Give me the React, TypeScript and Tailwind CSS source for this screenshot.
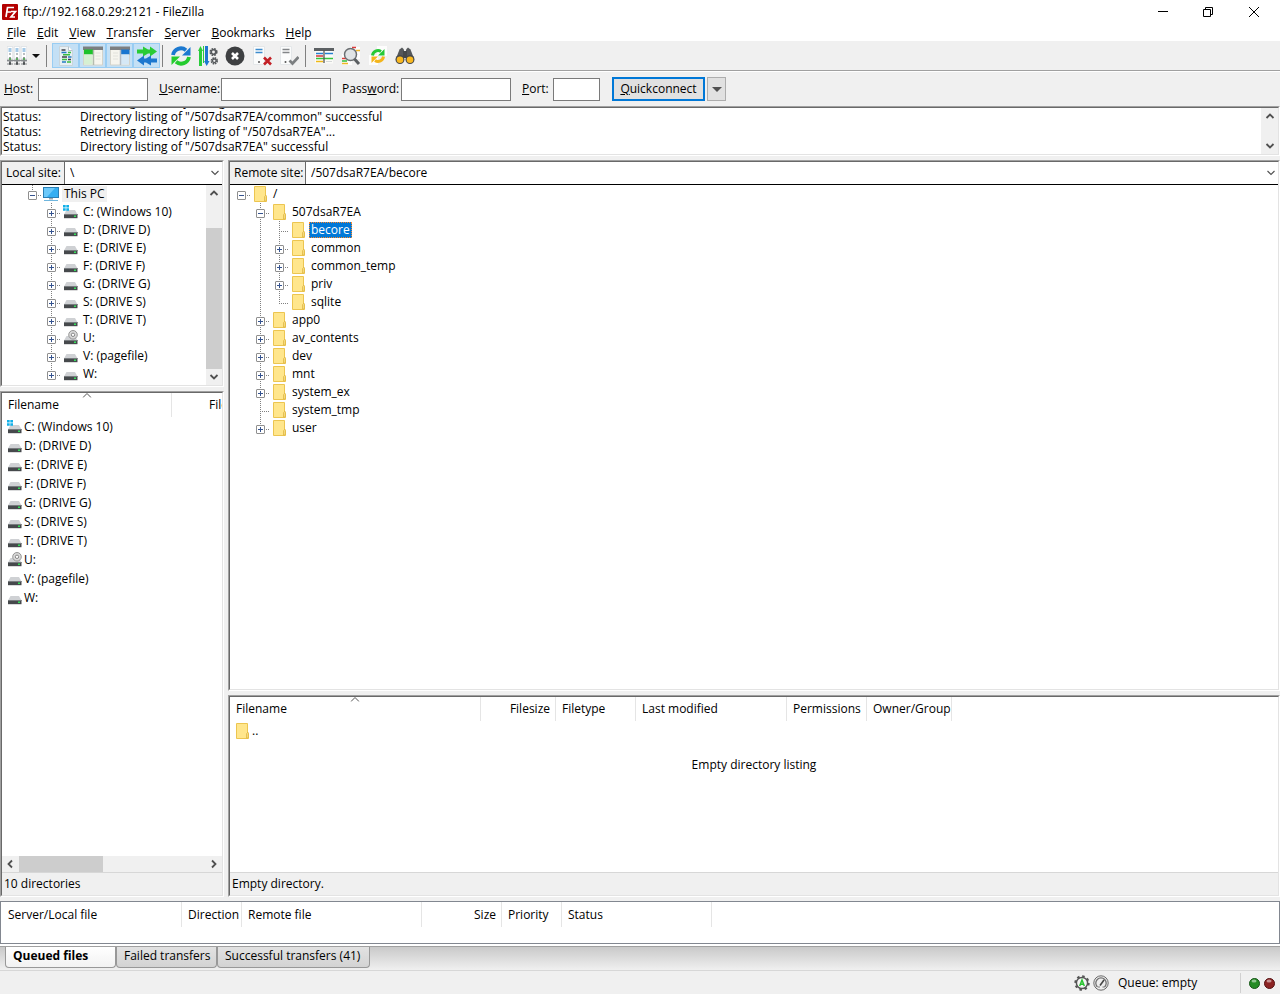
import type { ReactNode } from 'react'
import clsx from 'clsx'

type DriveKind = 'windows' | 'disk' | 'optical'

type Drive = {
  label: string,
  kind: DriveKind,
}

type GuideCell = 'blank' | 'line' | 'plus' | 'plusLast' | 'minus' | 'minusLast' | 'minusRoot' | 'tee' | 'elbow'

type RemoteNode = {
  name: string,
  cells: GuideCell[],
  selected?: boolean,
}

const drives: Drive[] = [
  { label: 'C: (Windows 10)', kind: 'windows' },
  { label: 'D: (DRIVE D)', kind: 'disk' },
  { label: 'E: (DRIVE E)', kind: 'disk' },
  { label: 'F: (DRIVE F)', kind: 'disk' },
  { label: 'G: (DRIVE G)', kind: 'disk' },
  { label: 'S: (DRIVE S)', kind: 'disk' },
  { label: 'T: (DRIVE T)', kind: 'disk' },
  { label: 'U:', kind: 'optical' },
  { label: 'V: (pagefile)', kind: 'disk' },
  { label: 'W:', kind: 'disk' },
]

const remoteNodes: RemoteNode[] = [
  { name: '/', cells: ['minusRoot'] },
  { name: '507dsaR7EA', cells: ['blank', 'minus'] },
  { name: 'becore', cells: ['blank', 'line', 'tee'], selected: true },
  { name: 'common', cells: ['blank', 'line', 'plus'] },
  { name: 'common_temp', cells: ['blank', 'line', 'plus'] },
  { name: 'priv', cells: ['blank', 'line', 'plus'] },
  { name: 'sqlite', cells: ['blank', 'line', 'elbow'] },
  { name: 'app0', cells: ['blank', 'plus'] },
  { name: 'av_contents', cells: ['blank', 'plus'] },
  { name: 'dev', cells: ['blank', 'plus'] },
  { name: 'mnt', cells: ['blank', 'plus'] },
  { name: 'system_ex', cells: ['blank', 'plus'] },
  { name: 'system_tmp', cells: ['blank', 'tee'] },
  { name: 'user', cells: ['blank', 'plusLast'] },
]

const logLines = [
  'Retrieving directory listing of "/507dsaR7EA/common"...',
  'Directory listing of "/507dsaR7EA/common" successful',
  'Retrieving directory listing of "/507dsaR7EA"...',
  'Directory listing of "/507dsaR7EA" successful',
]

const menus = [
  { key: 'F', rest: 'ile' },
  { key: 'E', rest: 'dit' },
  { key: 'V', rest: 'iew' },
  { key: 'T', rest: 'ransfer' },
  { key: 'S', rest: 'erver' },
  { key: 'B', rest: 'ookmarks' },
  { key: 'H', rest: 'elp' },
]

/* ---------- shared pieces ---------- */

const Sunken = ({ className, children }: { className?: string, children: ReactNode }) => (
  <div className={clsx('flex border border-t-[#a0a0a0] border-l-[#a0a0a0] border-r-white border-b-white', className)}>
    <div className="flex min-w-0 flex-1 flex-col overflow-hidden border border-t-[#696969] border-l-[#696969] border-r-[#e3e3e3] border-b-[#e3e3e3] bg-white">
      {children}
    </div>
  </div>
)

const chevrons = {
  up: 'M1.500 7 L5 3.500 L8.500 7',
  down: 'M1.500 3 L5 6.500 L8.500 3',
  left: 'M7 1.500 L3.500 5 L7 8.500',
  right: 'M3 1.500 L6.500 5 L3 8.500',
}

const Chevron = ({ dir, bold }: { dir: keyof typeof chevrons, bold?: boolean }) => (
  <svg width="10" height="10" viewBox="0 0 10 10" fill="none" stroke="#505050" strokeWidth={bold ? 1.8 : 1.1} aria-hidden="true">
    <path d={chevrons[dir]} />
  </svg>
)

const ScrollButton = ({ dir }: { dir: keyof typeof chevrons }) => (
  <button type="button" aria-label={`Scroll ${dir}`} className="flex h-4 w-4 shrink-0 items-center justify-center">
    <Chevron dir={dir} bold />
  </button>
)

/* ---------- small icons ---------- */

const FolderIcon = () => (
  <svg width="16" height="16" viewBox="0 0 16 16" className="shrink-0" aria-hidden="true">
    <path d="M1.500 .5h11v9l1 .8v5.200h-12z" fill="#ffe68c" stroke="#ecc550" />
    <path d="M11.500 15V10.500l1.500-1.500v6z" fill="#ffeeaa" stroke="#dfb63f" strokeWidth=".8" />
  </svg>
)

const PcIcon = () => (
  <svg width="18" height="16" viewBox="0 0 18 16" className="shrink-0" aria-hidden="true">
    <rect x="1.500" y="1.500" width="15" height="10" fill="#35aef2" stroke="#2a7fb5" />
    <path d="M2 2h11L5 11H2z" fill="#6cc9fa" />
    <path d="M7 12h4v1.500H7z" fill="#9aa5ad" />
    <path d="M2 14.500h14" stroke="#6fb6de" />
  </svg>
)

const DriveIcon = ({ kind }: { kind: DriveKind }) => (
  <svg width="16" height="16" viewBox="0 0 16 16" className="shrink-0" aria-hidden="true">
    <path d="M3.500 6h8.500l2.500 4.500H1z" fill="#cfd1d4" />
    <path d="M1 10h13.500v4.200H1z" fill="#46494c" />
    <path d="M1 10h13.500v1H1z" fill="#777b7e" />
    <rect x="11" y="11.500" width="2" height="1.500" fill="#35e05a" />
    {kind === 'windows' && (
      <path d="M0 1h2.700v2.500H0zM3.300 1H6v2.500H3.300zM0 4.200h2.700v2.500H0zM3.300 4.200H6v2.500H3.300z" fill="#12b0e8" />
    )}
    {kind === 'optical' && (
      <>
        <circle cx="10" cy="4.800" r="4.300" fill="#d8d8d8" stroke="#8c8c8c" strokeWidth=".9" />
        <circle cx="10" cy="4.800" r="1.700" fill="#fff" stroke="#888" />
      </>
    )}
  </svg>
)

const AppIcon = () => (
  <svg width="16" height="16" viewBox="0 0 16 16" aria-hidden="true">
    <rect width="16" height="16" rx="1" fill="#b30000" />
    <path d="M4 13L5.500 3.500H12M4.800 8H9M9 7.500h4.500L9 13h4" fill="none" stroke="#fff" strokeWidth="1.700" />
  </svg>
)

/* ---------- toolbar icons ---------- */

const Icon = ({ children }: { children: ReactNode }) => (
  <svg width="20" height="20" viewBox="0 0 20 20" fill="none" className="shrink-0" aria-hidden="true">{children}</svg>
)

const SiteManagerIcon = () => (
  <Icon>
    {[0, 7, 14].map((x) => (
      <g key={x} transform={`translate(${x} 0)`}>
        <path d="M.3 .5h5.400v12H.3z" fill="#fff" stroke="#d3d9dd" strokeWidth=".6" />
        <path d="M1.500 3h3M1.500 5h3" stroke="#4b93cf" strokeWidth="1.200" />
        <circle cx="3" cy="8" r=".9" fill="#9aa0a4" />
        <path d="M3 11v6M0 14.500h6" stroke="#6a6e70" strokeWidth="1.400" />
        <path d="M0 18h6" stroke="#85898c" />
        <path d="M2 17.500h2" stroke="#4c5052" strokeWidth="2.500" />
        <circle cx="3" cy="13" r="1" fill="#4db74d" />
      </g>
    ))}
    <path d="M0 14.500h20" stroke="#85898c" strokeWidth="1.200" />
  </Icon>
)

const LogIcon = () => (
  <Icon>
    <path d="M3.500 .5h9l4 4V19.500h-13z" fill="#e8eff3" stroke="#c9d5dc" />
    <path d="M12.500 .5v4h4" fill="#fff" stroke="#b6c3cb" />
    <path d="M5.500 4h4M6 11h5M12 13.500h3" stroke="#3d4248" strokeWidth="1.500" />
    <path d="M5.500 6.500h5M12 11h3.500M6 16h4" stroke="#247cc4" strokeWidth="1.500" />
    <path d="M12 6.500h3M6 13.500h5M11 16h4M7 8.800h7" stroke="#39bd40" strokeWidth="1.500" />
  </Icon>
)

const LocalTreeIcon = () => (
  <Icon>
    <path d="M.5 3h19v16H.5z" fill="#f6f5ee" stroke="#d4d3ca" />
    <path d="M0 .5h20v3.500H0z" fill="#7c7f81" />
    <path d="M1 3.500h9v5H1z" fill="#1dc22a" />
    <path d="M1 8.500h8.500V18.500H1z" fill="#d6f0d2" />
    <path d="M10.500 4v15" stroke="#b4bcb0" strokeWidth="1.500" />
    <path d="M12.500 7h5M12.500 10h5M12.500 13h5" stroke="#e2e2dc" />
  </Icon>
)

const RemoteTreeIcon = () => (
  <Icon>
    <path d="M.5 3h19v16H.5z" fill="#f6f5ee" stroke="#d4d3ca" />
    <path d="M0 .5h20v3.500H0z" fill="#7c7f81" />
    <path d="M11 3.500h8.500v5H11z" fill="#1976d0" />
    <path d="M11 8.500h8V18.500h-8z" fill="#d5e8f6" />
    <path d="M10.500 4v15" stroke="#b4bcc4" strokeWidth="1.500" />
    <path d="M3 7h5M3 10h5M3 13h5" stroke="#e2e2dc" />
  </Icon>
)

const QueueIcon = () => (
  <Icon>
    <path d="M0 3.500h6V.5l5 3h2V.5l7 5-7 5v-3h-2l-5 3v-3H0z" fill="#28cc35" />
    <path d="M20 12.500h-6v-3l-5 3H7v-3l-7 5 7 5v-3h2l5 3v-3h6z" fill="#1d78cf" />
  </Icon>
)

const RefreshIcon = () => (
  <Icon>
    <path d="M2 9A8 8 0 0 1 15 4.200" stroke="#1c79d0" strokeWidth="3.800" />
    <path d="M19.500 1v8.500H11z" fill="#1c79d0" />
    <path d="M18 11A8 8 0 0 1 5 15.800" stroke="#24cc2f" strokeWidth="3.800" />
    <path d="M.5 19v-8.500H9z" fill="#24cc2f" />
  </Icon>
)

const ProcessQueueIcon = () => (
  <Icon>
    <path d="M2.500 20V3" stroke="#29cc3a" strokeWidth="3" />
    <path d="M0 5L2.500 0 5 5z" fill="#29cc3a" />
    <path d="M5.500 0v17" stroke="#29cc3a" />
    <path d="M8.500 0v16" stroke="#1d78cf" strokeWidth="3" />
    <path d="M6 15h5.500L8.700 20z" fill="#1d78cf" />
    <circle cx="15.500" cy="6" r="3.200" stroke="#55595c" strokeWidth="1.800" strokeDasharray="1.700 .85" />
    <circle cx="15.500" cy="6" r="2.200" fill="#f0f0f0" stroke="#55595c" strokeWidth="1.500" />
    <circle cx="16.300" cy="14.800" r="2.800" stroke="#55595c" strokeWidth="1.800" strokeDasharray="1.500 .7" />
    <circle cx="16.300" cy="14.800" r="1.800" fill="#f0f0f0" stroke="#55595c" strokeWidth="1.300" />
  </Icon>
)

const CancelIcon = () => (
  <Icon>
    <circle cx="10" cy="10" r="9.500" fill="#3e4042" />
    <path d="M7 7l6 6M13 7l-6 6" stroke="#fff" strokeWidth="2.600" />
  </Icon>
)

const DisconnectIcon = () => (
  <Icon>
    <path d="M1.500.5h11v18h-11z" fill="#fbfcfc" stroke="#e4e7e9" />
    <path d="M3.500 3.500h7M3.500 6.500h7" stroke="#3e8ccd" strokeWidth="1.600" />
    <circle cx="7" cy="16" r="1" fill="#555" />
    <path d="M12 11.500l7 7M19 11.500l-7 7" stroke="#c32026" strokeWidth="2.600" />
  </Icon>
)

const ReconnectIcon = () => (
  <Icon>
    <path d="M1.500.5h11v18h-11z" fill="#fbfcfc" stroke="#e4e7e9" />
    <path d="M3.500 3.500h7M3.500 6.500h7" stroke="#828588" strokeWidth="1.600" />
    <circle cx="6.500" cy="16" r="1" fill="#555" />
    <path d="M10.500 14.500l3 3 6-6.500" stroke="#7c7f81" strokeWidth="2.700" />
  </Icon>
)

const FilterIcon = () => (
  <Icon>
    <path d="M1 3h18v14.500H1z" fill="#fbfbf8" />
    <path d="M0 3.500h20" stroke="#5c6063" strokeWidth="3" />
    <path d="M2 7.500h7" stroke="#2680d0" strokeWidth="1.500" />
    <path d="M11 7.500h8" stroke="#2680d0" strokeWidth="1.500" />
    <path d="M2 10h7" stroke="#d73438" strokeWidth="1.500" />
    <path d="M2 12.500h17" stroke="#35c53c" strokeWidth="1.500" />
    <path d="M2 15.500h7" stroke="#efb817" strokeWidth="1.500" />
    <path d="M12 15.500h6" stroke="#d5d8d8" />
    <path d="M10 4v13" stroke="#555" strokeWidth="1.300" />
  </Icon>
)

const CompareIcon = () => (
  <Icon>
    <path d="M9 1h10v12H9zM1 8h10v11H1z" fill="#fdfdfd" />
    <path d="M11 1.500h4" stroke="#dd3b3b" strokeWidth="1.500" />
    <path d="M15 4.500h4" stroke="#f0b626" strokeWidth="1.500" />
    <path d="M1 12.500h4" stroke="#dc3a36" strokeWidth="1.500" />
    <path d="M1 15h5" stroke="#2ebb37" strokeWidth="1.500" />
    <path d="M1 17.500h6" stroke="#f0b626" strokeWidth="1.500" />
    <circle cx="9.500" cy="8.500" r="6" fill="#e0e4e6" stroke="#6b6f72" strokeWidth="1.500" />
    <path d="M13.500 13l4.500 5" stroke="#5b5f62" strokeWidth="3" />
  </Icon>
)

const SyncBrowseIcon = () => (
  <Icon>
    <path d="M9 0h10v10H9zM1 9h9v10H1z" fill="#fdfdfd" />
    <path d="M4.500 9.500A5.500 5.500 0 0 1 13 5.500" stroke="#26c935" strokeWidth="3" />
    <path d="M16.500 3v6.500H10z" fill="#26c935" />
    <path d="M15.500 10.500A5.500 5.500 0 0 1 7 14.500" stroke="#f3b51b" strokeWidth="3" />
    <path d="M3.500 17v-6.500H10z" fill="#f3b51b" />
  </Icon>
)

const FindIcon = () => (
  <Icon>
    <path d="M4.500 3.500L7 1.500l2 2v9H1z" fill="#55585b" />
    <path d="M15.500 3.500L13 1.500l-2 2v9h8z" fill="#55585b" />
    <path d="M8 5h4v7H8z" fill="#45484a" />
    <circle cx="5" cy="13.500" r="4.500" fill="#47494b" />
    <circle cx="15" cy="13.500" r="4.500" fill="#47494b" />
    <circle cx="5" cy="13.800" r="3.300" fill="#f9b820" />
    <circle cx="15" cy="13.800" r="3.300" fill="#f9b820" />
  </Icon>
)

const toggles = [
  { label: 'Toggle message log', icon: <LogIcon /> },
  { label: 'Toggle local tree', icon: <LocalTreeIcon /> },
  { label: 'Toggle remote tree', icon: <RemoteTreeIcon /> },
  { label: 'Toggle transfer queue', icon: <QueueIcon /> },
]

const actions = [
  { label: 'Refresh', icon: <RefreshIcon /> },
  { label: 'Process queue', icon: <ProcessQueueIcon /> },
  { label: 'Cancel', icon: <CancelIcon /> },
  { label: 'Disconnect', icon: <DisconnectIcon /> },
  { label: 'Reconnect', icon: <ReconnectIcon /> },
]

const tools = [
  { label: 'Filters', icon: <FilterIcon /> },
  { label: 'Directory comparison', icon: <CompareIcon /> },
  { label: 'Synchronized browsing', icon: <SyncBrowseIcon /> },
  { label: 'Search', icon: <FindIcon /> },
]

/* ---------- window top ---------- */

const TitleBar = () => (
  <header className="flex h-6 items-center bg-white pr-0.5 pb-px pl-0.5">
    <AppIcon />
    <h1 className="ml-[5px] flex-1">ftp://192.168.0.29:2121 - FileZilla</h1>
    <button type="button" aria-label="Minimize" className="flex w-[46px] justify-center">
      <svg width="10" height="10"><path d="M0 4.500h10" stroke="#000" /></svg>
    </button>
    <button type="button" aria-label="Restore" className="flex w-11 justify-center">
      <svg width="10" height="10" fill="none" stroke="#000"><path d="M.5 2.500h7v7h-7zM2.500 2.500v-2h7v7h-2" /></svg>
    </button>
    <button type="button" aria-label="Close" className="flex w-12 justify-center">
      <svg width="10" height="10" stroke="#000"><path d="M0 0l10 10M10 0L0 10" /></svg>
    </button>
  </header>
)

const ToolButton = ({ label, children, pressed }: { label: string, children: ReactNode, pressed?: boolean }) => (
  <button
    type="button"
    aria-label={label}
    className={clsx('flex h-[25px] w-[27px] items-center justify-center', pressed && 'border border-[#99cdf3] bg-[#c4e0f5]')}
  >
    {children}
  </button>
)

const Divider = () => <span className="h-[22px] w-px bg-[#808080]" />

const Toolbar = () => (
  <div className="border-b border-white">
    <div className="flex h-[30px] items-center border-b border-[#a0a0a0] pl-[3px]">
      <ToolButton label="Site manager"><SiteManagerIcon /></ToolButton>
      <button type="button" aria-label="Site list" className="flex h-[25px] w-3 items-center justify-center">
        <svg width="8" height="4"><path d="M0 0h8L4 4z" fill="#111" /></svg>
      </button>
      <span className="w-1" />
      <Divider />
      <div className="ml-[5px] flex">
        {toggles.map((item) => <ToolButton key={item.label} label={item.label} pressed>{item.icon}</ToolButton>)}
      </div>
      <span className="w-0.5" />
      <Divider />
      <div className="ml-1 flex">
        {actions.map((item) => <ToolButton key={item.label} label={item.label}>{item.icon}</ToolButton>)}
      </div>
      <span className="w-[3px]" />
      <Divider />
      <div className="ml-1 flex">
        {tools.map((item) => <ToolButton key={item.label} label={item.label}>{item.icon}</ToolButton>)}
      </div>
    </div>
  </div>
)

const fieldClass = 'h-[23px] border border-[#7a7a7a] bg-white px-1 outline-none'

const QuickConnect = () => (
  <form className="flex h-[34px] items-center pl-1" onSubmit={(e) => e.preventDefault()}>
    <label htmlFor="host" className="w-[34px]"><u>H</u>ost:</label>
    <input id="host" className={clsx(fieldClass, 'w-[110px]')} />
    <label htmlFor="username" className="ml-[11px] w-[62px]"><u>U</u>sername:</label>
    <input id="username" className={clsx(fieldClass, 'w-[110px]')} />
    <label htmlFor="password" className="ml-[11px] w-[59px]">Pass<u>w</u>ord:</label>
    <input id="password" type="password" className={clsx(fieldClass, 'w-[110px]')} />
    <label htmlFor="port" className="ml-[11px] w-[31px]"><u>P</u>ort:</label>
    <input id="port" className={clsx(fieldClass, 'w-[47px]')} />
    <button type="submit" className="ml-3 h-6 w-[93px] border-2 border-[#0078d7] bg-[#e1e1e1]"><u>Q</u>uickconnect</button>
    <button type="button" aria-label="Quickconnect history" className="ml-0.5 flex h-6 w-[19px] items-center justify-center border border-[#adadad] bg-[#e1e1e1]">
      <svg width="10" height="5"><path d="M0 0h10L5 5z" fill="#505050" /></svg>
    </button>
  </form>
)

const MessageLog = () => (
  <Sunken className="h-[50px] shrink-0">
    <div className="flex min-h-0 flex-1">
      <div className="flex flex-1 flex-col justify-end overflow-hidden pl-px">
        {logLines.map((line) => (
          <p key={line} className="flex h-[15px] shrink-0 items-center">
            <span className="w-[77px]">Status:</span>
            <span>{line}</span>
          </p>
        ))}
      </div>
      <div className="flex w-[17px] flex-col items-center justify-between bg-[#f0f0f0]">
        <ScrollButton dir="up" />
        <ScrollButton dir="down" />
      </div>
    </div>
  </Sunken>
)

/* ---------- trees ---------- */

const Guide = ({ cell }: { cell: GuideCell }) => {
  const boxed = cell.startsWith('plus') || cell.startsWith('minus')
  const above = cell !== 'blank' && cell !== 'minusRoot'
  const below = cell === 'line' || cell === 'tee' || cell === 'plus' || cell === 'minus'
  const branch = boxed || cell === 'tee' || cell === 'elbow'
  const svg = (
    <svg width="19" height="18" viewBox="0 0 19 18" fill="none" aria-hidden="true">
      {above && <path d="M9.500 0v10" stroke="#808080" strokeDasharray="1 1" />}
      {below && <path d="M9.500 10v8" stroke="#808080" strokeDasharray="1 1" />}
      {branch && <path d="M9 10.500h10" stroke="#808080" strokeDasharray="1 1" />}
      {boxed && (
        <>
          <rect x="5.500" y="6.500" width="8" height="8" rx=".5" fill="#fff" stroke="#8f8f8f" />
          <path d="M7 10.500h5" stroke="#35538f" />
          {cell.startsWith('plus') && <path d="M9.500 8v5" stroke="#35538f" />}
        </>
      )}
    </svg>
  )
  if (!boxed) return <span className="shrink-0">{svg}</span>
  return <button type="button" aria-label={cell.startsWith('plus') ? 'Expand' : 'Collapse'} className="shrink-0">{svg}</button>
}

const PathBar = ({ id, label, path, labelClass }: { id: string, label: string, path: string, labelClass: string }) => (
  <div className="flex h-[23px] shrink-0 border-b border-black">
    <label htmlFor={id} className={clsx('flex shrink-0 items-center border-r border-[#696969] bg-[#f0f0f0] pl-1', labelClass)}>{label}</label>
    <div className="relative flex-1">
      <select id={id} className="h-full w-full appearance-none bg-white pl-[5px] outline-none">
        <option>{path}</option>
      </select>
      <span className="pointer-events-none absolute top-1.5 right-0.5"><Chevron dir="down" /></span>
    </div>
  </div>
)

const LocalTree = () => (
  <Sunken className="h-[227px] shrink-0">
    <PathBar id="local-site" label="Local site:" path="\" labelClass="w-[63px]" />
    <div className="flex min-h-0 flex-1">
      <ul className="flex-1 overflow-hidden pl-[21px]">
        <li className="flex h-[18px] items-center">
          <Guide cell="minusLast" />
          <PcIcon />
          <span className="ml-0.5 bg-[#f0f0f0] px-0.5">This PC</span>
        </li>
        {drives.map((drive, index) => (
          <li key={drive.label} className="flex h-[18px] items-center">
            <Guide cell="blank" />
            <Guide cell={index === drives.length - 1 ? 'plusLast' : 'plus'} />
            <span className="ml-0.5"><DriveIcon kind={drive.kind} /></span>
            <span className="pl-1">{drive.label}</span>
          </li>
        ))}
      </ul>
      <div className="flex w-4 flex-col bg-[#f0f0f0]">
        <ScrollButton dir="up" />
        <span className="mt-[27px] flex-1 bg-[#cdcdcd]" />
        <ScrollButton dir="down" />
      </div>
    </div>
  </Sunken>
)

const RemoteTree = () => (
  <Sunken className="min-h-0 flex-1">
    <PathBar id="remote-site" label="Remote site:" path="/507dsaR7EA/becore" labelClass="w-[76px]" />
    <ul className="flex-1 overflow-auto pl-0.5">
      {remoteNodes.map((node) => (
        <li key={node.name} className="flex h-[18px] items-center">
          {node.cells.map((cell, index) => <Guide key={index} cell={cell} />)}
          <span className="ml-0.5"><FolderIcon /></span>
          <span className={clsx('ml-0.5 px-0.5', node.selected && 'bg-[#0078d7] text-white outline-1 -outline-offset-1 outline-dotted outline-[#ff8728]')}>{node.name}</span>
        </li>
      ))}
    </ul>
  </Sunken>
)

/* ---------- file lists ---------- */

const SortMark = () => (
  <svg width="9" height="5" viewBox="0 0 9 5" fill="none" stroke="#555" className="absolute top-0 left-1/2 -translate-x-1/2" aria-hidden="true">
    <path d="M.5 4.500l4-4 4 4" />
  </svg>
)

const Th = ({ children, className, sorted }: { children?: ReactNode, className?: string, sorted?: boolean }) => (
  <th className={clsx('relative border-r border-[#e5e5e5] py-0 text-left font-normal whitespace-nowrap', className)}>
    {sorted && <SortMark />}
    {children}
  </th>
)

const LocalList = () => (
  <Sunken className="min-h-0 flex-1">
    <div className="min-h-0 flex-1 overflow-hidden">
      <table className="w-[250px] table-fixed border-separate border-spacing-0">
        <thead>
          <tr className="h-6">
            <Th className="w-[170px] pl-1.5" sorted>Filename</Th>
            <Th className="w-20 pl-[37px]">Filesize</Th>
          </tr>
        </thead>
        <tbody>
          {drives.map((drive) => (
            <tr key={drive.label} className="h-[19px]">
              <td className="p-0">
                <div className="flex items-center gap-px pl-[5px]">
                  <DriveIcon kind={drive.kind} />
                  <span>{drive.label}</span>
                </div>
              </td>
              <td className="p-0" />
            </tr>
          ))}
        </tbody>
      </table>
    </div>
    <div className="flex h-4 shrink-0 bg-[#f0f0f0]">
      <ScrollButton dir="left" />
      <div className="flex-1"><span className="ml-px block h-4 w-[84px] bg-[#cdcdcd]" /></div>
      <ScrollButton dir="right" />
    </div>
    <p className="flex h-[23px] shrink-0 items-center border-t border-[#d7d7d7] bg-[#f0f0f0] pl-0.5">10 directories</p>
  </Sunken>
)

const RemoteList = () => (
  <Sunken className="h-[202px] shrink-0">
    <div className="min-h-0 flex-1 overflow-hidden">
      <table className="w-[722px] table-fixed border-separate border-spacing-0">
        <thead>
          <tr className="h-6">
            <Th className="w-[251px] pl-1.5" sorted>Filename</Th>
            <Th className="w-[75px] pr-[5px] text-right">Filesize</Th>
            <Th className="w-20 pl-1.5">Filetype</Th>
            <Th className="w-[151px] pl-1.5">Last modified</Th>
            <Th className="w-20 pl-1.5">Permissions</Th>
            <Th className="w-[85px] pl-1.5">Owner/Group</Th>
          </tr>
        </thead>
        <tbody>
          <tr className="h-[19px]">
            <td className="p-0" colSpan={6}>
              <div className="flex items-center gap-px pl-[5px]">
                <FolderIcon />
                <span>..</span>
              </div>
            </td>
          </tr>
        </tbody>
      </table>
      <p className="mt-[17px] text-center">Empty directory listing</p>
    </div>
    <p className="flex h-[23px] shrink-0 items-center border-t border-[#d7d7d7] bg-[#f0f0f0] pl-0.5">Empty directory.</p>
  </Sunken>
)

/* ---------- window bottom ---------- */

const TransferQueue = () => (
  <div className="h-[43px] shrink-0 border border-[#828790] bg-white">
    <table className="w-[711px] table-fixed border-separate border-spacing-0">
      <thead>
        <tr className="h-[25px]">
          <Th className="w-[181px] pl-[7px]">Server/Local file</Th>
          <Th className="w-15 pl-1.5">Direction</Th>
          <Th className="w-45 pl-1.5">Remote file</Th>
          <Th className="w-20 pr-[5px] text-right">Size</Th>
          <Th className="w-15 pl-1.5">Priority</Th>
          <Th className="w-[150px] pl-1.5">Status</Th>
        </tr>
      </thead>
    </table>
  </div>
)

const tabClass = 'h-[21px] rounded-b border border-t-0 border-[#989898] px-[7px] pb-0.5 text-left whitespace-nowrap'

const QueueTabs = () => (
  <div className="h-[27px] shrink-0 border-b border-[#d7d7d7] bg-white pt-0.5">
    <div className="flex h-6 border-t border-[#a0a0a0] bg-linear-to-b from-[#c9c9c9] to-[#f0f0f0] pl-[5px]" role="tablist">
      <button type="button" role="tab" aria-selected="true" className={clsx(tabClass, 'w-[111px] bg-linear-to-b from-white to-[#f2f2f2] font-bold')}>Queued files</button>
      <button type="button" role="tab" aria-selected="false" className={clsx(tabClass, 'w-[101px] bg-linear-to-b from-[#e2e2e2] to-[#d3d3d3]')}>Failed transfers</button>
      <button type="button" role="tab" aria-selected="false" className={clsx(tabClass, 'w-[153px] bg-linear-to-b from-[#e2e2e2] to-[#d3d3d3]')}>Successful transfers (41)</button>
    </div>
  </div>
)

const Led = ({ color, dark }: { color: string, dark: string }) => (
  <svg width="11" height="11" viewBox="0 0 11 11" aria-hidden="true">
    <circle cx="5.500" cy="5.500" r="5" fill={color} stroke={dark} />
    <ellipse cx="5" cy="3" rx="2.500" ry="1.500" fill="#fff" opacity=".5" />
  </svg>
)

const StatusBar = () => (
  <footer className="flex h-[23px] shrink-0 items-center justify-end pt-px pr-[5px]">
    <svg width="16" height="16" viewBox="0 0 16 16" fill="none" aria-hidden="true">
      <circle cx="8" cy="8" r="6.700" stroke="#555" strokeWidth="2" strokeDasharray="2.500 2.760" />
      <circle cx="8" cy="8" r="5.600" fill="#f5f5f5" stroke="#555" strokeWidth="1.500" />
      <path d="M5.700 11L8 5l2.300 6M6.500 9.300h3" stroke="#28c32f" strokeWidth="1.500" />
    </svg>
    <svg width="16" height="16" viewBox="0 0 16 16" fill="none" className="ml-[3px]" aria-hidden="true">
      <circle cx="8" cy="8" r="7.200" fill="#eee" stroke="#6a6a6a" />
      <path d="M4.500 12A5.200 5.200 0 1 1 11.500 12" stroke="#707070" strokeWidth="1.300" />
      <path d="M7 10.500l4-5.500" stroke="#444" strokeWidth="1.600" />
      <path d="M5 12h2M9.500 12h2" stroke="#777" />
    </svg>
    <span className="ml-[9px] w-[122px]">Queue: empty</span>
    <span className="h-5 w-px bg-[#d0d0d0]" />
    <div className="ml-2 flex gap-1">
      <Led color="#258c25" dark="#155515" />
      <Led color="#8c2424" dark="#551111" />
    </div>
  </footer>
)

const App = () => {
  return (
    <div className="flex h-screen flex-col overflow-hidden bg-[#f0f0f0] font-['Open_Sans','Noto_Sans',sans-serif] text-[12px] leading-4 text-black">
      <TitleBar />
      <nav className="flex h-[17px] items-center gap-[11px] bg-white pl-[7px]">
        {menus.map((menu) => (
          <button key={menu.key} type="button"><u>{menu.key}</u>{menu.rest}</button>
        ))}
      </nav>
      <Toolbar />
      <QuickConnect />
      <MessageLog />
      <main className="my-1 flex min-h-0 flex-1 gap-1">
        <div className="flex w-56 shrink-0 flex-col gap-1">
          <LocalTree />
          <LocalList />
        </div>
        <div className="flex min-w-0 flex-1 flex-col gap-1">
          <RemoteTree />
          <RemoteList />
        </div>
      </main>
      <TransferQueue />
      <QueueTabs />
      <StatusBar />
    </div>
  )
}

export default App
